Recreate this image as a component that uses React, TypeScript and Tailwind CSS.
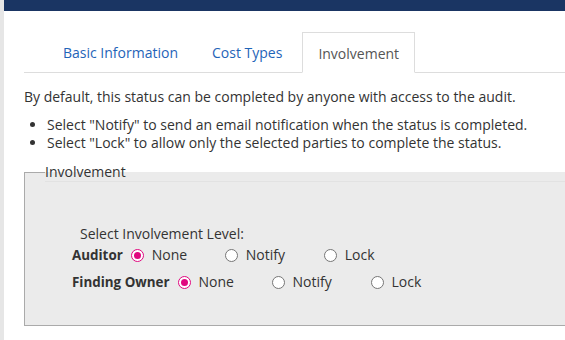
import React from 'react';

type Level = 'None' | 'Notify' | 'Lock';

const options: { label: Level; width: string }[] = [
  { label: 'None', width: 'w-[94px]' },
  { label: 'Notify', width: 'w-[99px]' },
  { label: 'Lock', width: 'w-[60px]' },
];

const Radio: React.FC<{ checked?: boolean }> = ({ checked }) =>
  checked ? (
    <span className="flex h-[13px] w-[13px] shrink-0 items-center justify-center rounded-full border-[1.5px] border-[#e0087f] bg-white">
      <span className="h-[7px] w-[7px] rounded-full bg-[#e0087f]" />
    </span>
  ) : (
    <span className="h-[13px] w-[13px] shrink-0 rounded-full border border-[#767676] bg-white" />
  );

const InvolvementRow: React.FC<{ name: string; value: Level }> = ({ name, value }) => (
  <div className="flex items-center">
    <span className="mr-2 text-[13.4px] font-bold text-[#333]">{name}</span>
    {options.map((o) => (
      <label key={o.label} className={`flex items-center gap-2 ${o.width}`}>
        <Radio checked={o.label === value} />
        <span>{o.label}</span>
      </label>
    ))}
  </div>
);

const App: React.FC = () => {
  return (
    <div className="flex h-[340px] w-[565px] overflow-hidden bg-white font-['Open_Sans',sans-serif] text-[14px] text-[#333]">
      <div className="w-[4px] shrink-0 bg-[#e6e6e6]" />
      <div className="flex min-w-0 flex-1 flex-col">
        <div className="h-[11px] shrink-0 bg-[#1a3563]" />

        <div className="pl-[20px]">
          <ul className="mt-[21px] flex w-[600px] border-b border-[#ddd] pl-[23px]">
            <li className="mr-[2px] flex h-[40px] items-center border border-transparent px-[15px] pt-[1px] text-[#1f64b8]">
              Basic Information
            </li>
            <li className="mr-[4px] flex h-[40px] items-center border border-transparent px-[15px] pt-[1px] text-[#1f64b8]">
              Cost Types
            </li>
            <li className="-mb-px flex h-[41px] items-center border border-b-white border-[#ddd] bg-white px-[15px] pt-[1px] text-[#555]">
              Involvement
            </li>
          </ul>

          <p className="mt-[15px] leading-[18px]">
            By default, this status can be completed by anyone with access to the audit.
          </p>
          <ul className="mt-[10px] list-disc pl-[23px] leading-[18px]">
            <li>Select "Notify" to send an email notification when the status is completed.</li>
            <li>Select "Lock" to allow only the selected parties to complete the status.</li>
          </ul>

          <fieldset className="mt-[11px] h-[163px] w-[600px] border border-[#aaa] bg-[#ebebeb] px-[20px]">
            <legend className="w-full border-b border-[#e2e2e2] leading-[18px] text-[#333]">
              Involvement
            </legend>
            <div className="mt-[43px] pl-[35px] leading-[18px]">Select Involvement Level:</div>
            <div className="mt-[3px] flex flex-col gap-[9px] pl-[27px] leading-[18px]">
              <InvolvementRow name="Auditor" value="None" />
              <InvolvementRow name="Finding Owner" value="None" />
            </div>
          </fieldset>
        </div>
      </div>
    </div>
  );
};

export default App;
